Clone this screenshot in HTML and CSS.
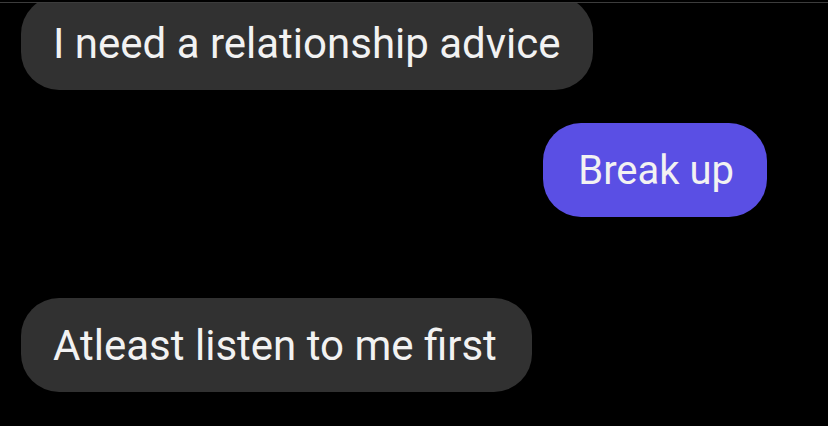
FILE: index.html
```html
<!DOCTYPE html>
<html lang="en">
<head>
    <meta charset="UTF-8">
    <meta name="viewport" content="width=device-width, initial-scale=1.0">
    <title>Chat</title>
    <link rel="stylesheet" href="styles.css">
</head>
<body>

<div class="topline"></div>

<div class="thread">
    <div class="msg received first">I need a relationship advice</div>
    <div class="msg sent">Break up</div>
    <div class="msg received last">Atleast listen to me first</div>
</div>

</body>
</html>
```

FILE: styles.css
```css
body {
    font-family: Roboto, 'Noto Sans', sans-serif;
    background-color: #000;
    color: #f2f2f2;
    margin: 0;
}

.topline {
    height: 1px;
    margin-top: 2px;
    background-color: #3c3c3c;
}

.thread {
    display: flex;
    flex-direction: column;
    overflow: hidden;
    height: 423px;
}

.msg {
    display: flex;
    align-items: center;
    height: 94px;
    padding: 0 32px;
    border-radius: 38px;
    white-space: nowrap;
}

.received {
    align-self: flex-start;
    margin-left: 21px;
    background-color: #313131;
    font-size: 42px;
}

.sent {
    align-self: flex-end;
    margin-right: 61px;
    margin-top: 33px;
    padding: 0 33px 0 35px;
    background-color: #5a4fe4;
    font-size: 40px;
}

/* premier message coupé par le haut de l'écran */
.first {
    margin-top: -7px;
}

.last {
    margin-top: 81px;
    padding-right: 35px;
}
```
